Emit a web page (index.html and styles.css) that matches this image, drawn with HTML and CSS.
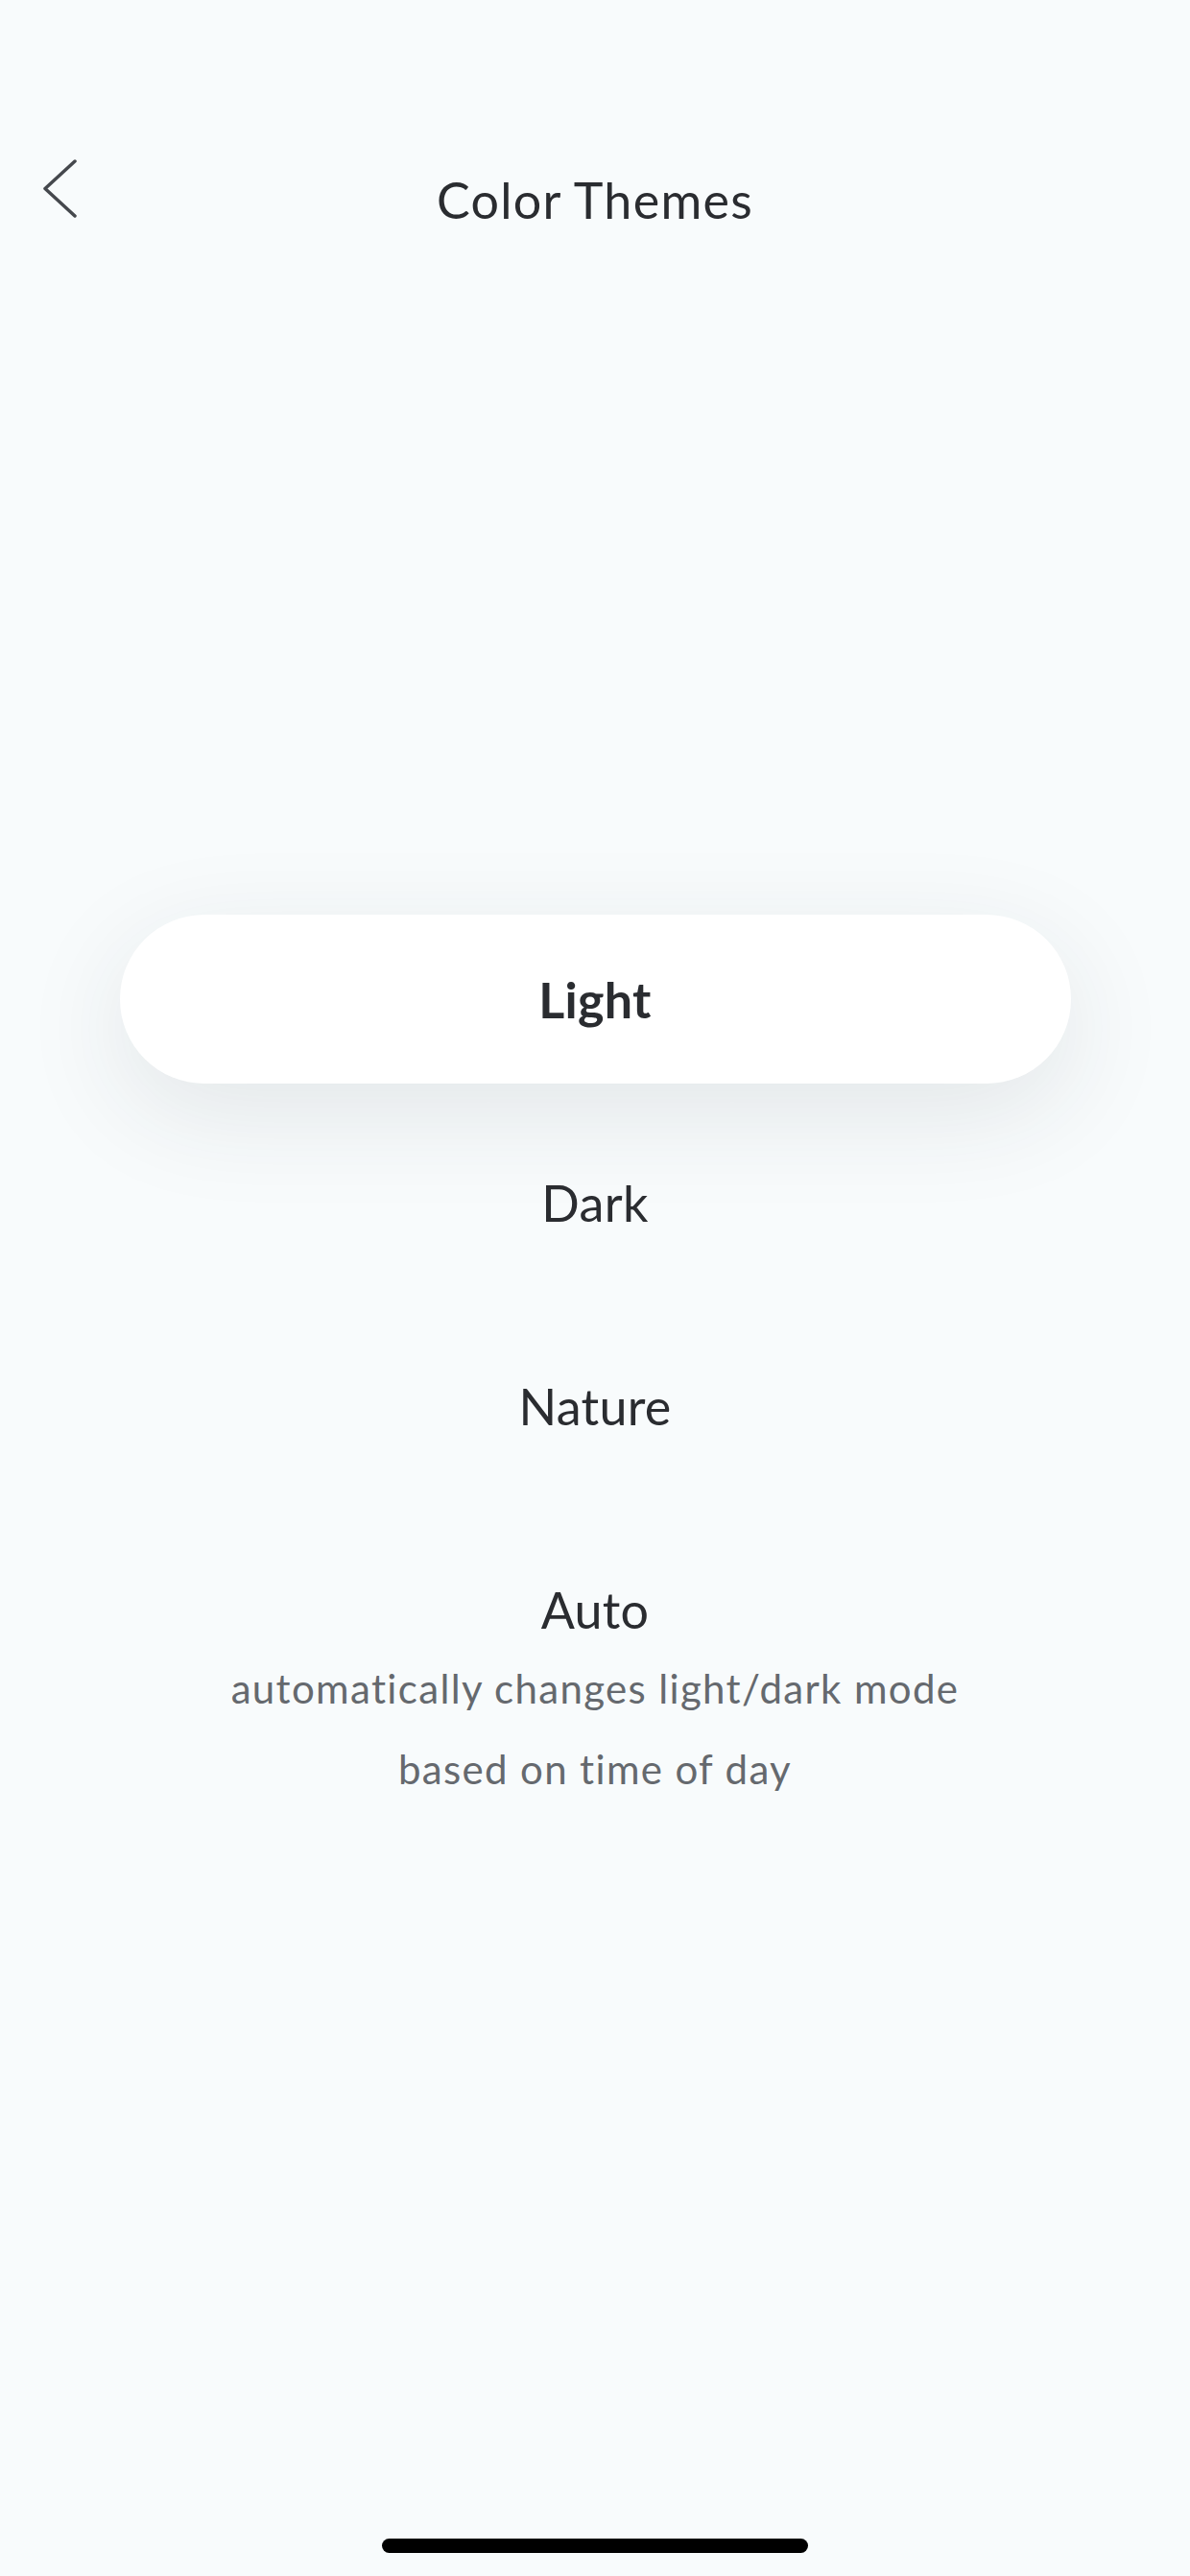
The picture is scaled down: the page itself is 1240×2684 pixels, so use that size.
FILE: index.html
```html
<!DOCTYPE html>
<html lang="en">
<head>
  <meta charset="UTF-8">
  <title>Color Themes</title>
  <link rel="stylesheet" href="styles.css">
</head>
<body>
  <div class="screen">
    <!-- 顶部导航 -->
    <header class="topbar">
      <a class="back" href="#" aria-label="Back">
        <svg width="36" height="61" viewBox="0 0 36 61">
          <path d="M34 2 L3 30.5 L34 59" fill="none" stroke="#45484d" stroke-width="3.5" stroke-linecap="round" stroke-linejoin="round"/>
        </svg>
      </a>
      <h1 class="title">Color Themes</h1>
      <span></span>
    </header>

    <!-- 主题列表 -->
    <ul class="theme-list">
      <li class="theme active">Light</li>
      <li class="theme">Dark</li>
      <li class="theme">Nature</li>
      <li class="theme theme-auto">
        <span class="theme-name">Auto</span>
        <p class="theme-desc">automatically changes light/dark mode<br>based on time of day</p>
      </li>
    </ul>

    <div class="home-indicator"></div>
  </div>
</body>
</html>
```

FILE: styles.css
```css
body {
  margin: 0;
  background-color: #f8fbfc;
  font-family: 'Lato', 'Open Sans', sans-serif;
  color: #2a2c30;
}

.screen {
  min-height: 2684px;
  display: flex;
  flex-direction: column;
}

/* 顶部导航 */
.topbar {
  display: grid;
  grid-template-columns: 1fr auto 1fr;
  align-items: start;
  padding: 166px 44px 0;
}

.back {
  display: block;
  width: 36px;
}

.back svg {
  display: block;
}

.title {
  margin: 12px 0 0;
  font-size: 52px;
  font-weight: 400;
  line-height: 60px;
  letter-spacing: 1.3px;
}

/* 主题列表 */
.theme-list {
  list-style: none;
  margin: 715px 0 0;
  padding: 0;
  display: flex;
  flex-direction: column;
  align-items: center;
  gap: 36px;
}

.theme {
  width: 991px;
  height: 176px;
  display: flex;
  align-items: center;
  justify-content: center;
  font-size: 52px;
  letter-spacing: 0.3px;
  border-radius: 88px;
}

.theme.active {
  background-color: #ffffff;
  font-weight: 700;
  box-shadow: 0 30px 110px rgba(40, 50, 60, 0.1);
}

.theme-auto {
  height: auto;
  flex-direction: column;
}

.theme-name {
  height: 176px;
  display: flex;
  align-items: center;
}

.theme-desc {
  margin: -48px 0 0;
  font-size: 42px;
  line-height: 84px;
  color: #65696e;
  text-align: center;
  letter-spacing: 1.35px;
}

.home-indicator {
  width: 444px;
  height: 15px;
  margin: auto auto 24px;
  background-color: #000;
  border-radius: 8px;
}
```
